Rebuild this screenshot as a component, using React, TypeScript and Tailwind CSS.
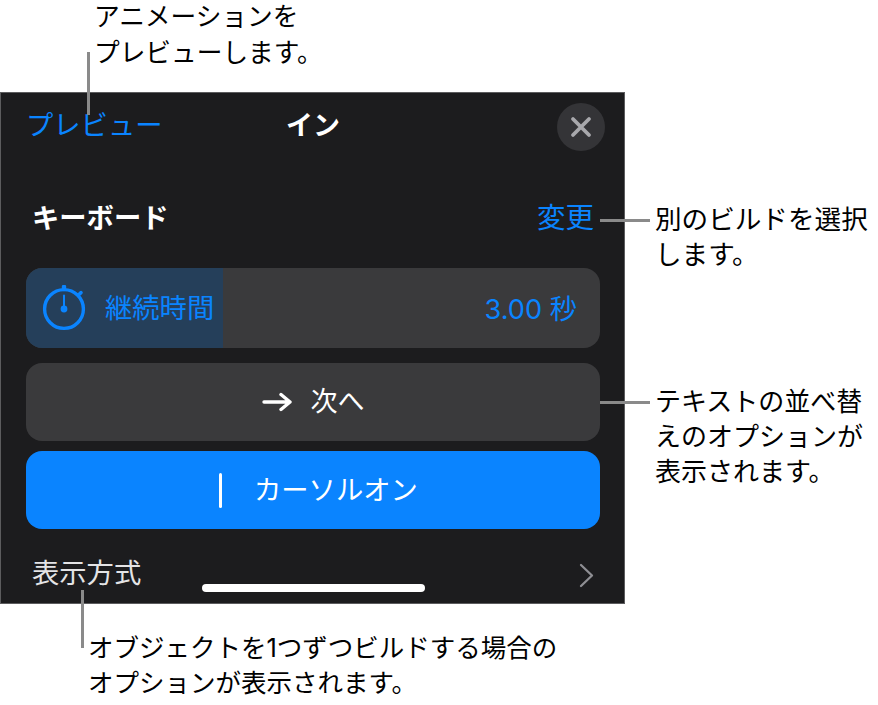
const font = "font-['Inter','Noto_Sans_CJK_JP',sans-serif]";

function Stopwatch() {
  return (
    <svg width="46" height="46" viewBox="0 0 46 46" fill="none" stroke="#0a84ff" strokeLinecap="round">
      <circle cx="23" cy="24" r="19.4" strokeWidth="3.4" />
      <path d="M23 1.8v2.2" strokeWidth="4.4" />
      <path d="M38 9.5l2-1.8" strokeWidth="3.6" />
      <path d="M23 10.5V24" strokeWidth="2" />
      <circle cx="23" cy="24" r="3.4" fill="#0a84ff" stroke="none" />
    </svg>
  );
}

function CloseIcon() {
  return (
    <svg width="24" height="24" viewBox="0 0 24 24" fill="none" stroke="#a8a8ac" strokeWidth="3.8" strokeLinecap="round">
      <path d="M4 4l16 16M20 4L4 20" />
    </svg>
  );
}

function ArrowIcon() {
  return (
    <svg width="30" height="22" viewBox="0 0 30 22" fill="none" stroke="#fff" strokeWidth="3.4" strokeLinecap="round" strokeLinejoin="round">
      <path d="M2 11h26M19 3.5l9 7.5-9 7.5" />
    </svg>
  );
}

function Chevron() {
  return (
    <svg width="15" height="25" viewBox="0 0 15 25" fill="none" stroke="#8e8e93" strokeWidth="2.3" strokeLinecap="round" strokeLinejoin="round">
      <path d="M2 2l11 10.5L2 23" />
    </svg>
  );
}

function Panel() {
  return (
    <div className="relative w-[625px] h-[512px] bg-[#1c1c1e] border border-[#5c5c5e] pl-[25px] pr-[24px] text-white">
      {/* Header */}
      <div className="relative flex items-center justify-between h-[64px]">
        <span className="pt-[2px] text-[#0a84ff] text-[27.3px]">プレビュー</span>
        <span className="absolute left-[260px] pt-[2px] font-bold text-[27px]">イン</span>
        <button className="flex items-center justify-center w-[48px] h-[48px] mt-[4px] mr-[-5px] rounded-full bg-[#343437]">
          <CloseIcon />
        </button>
      </div>

      {/* Section title */}
      <div className="flex items-center justify-between h-[40px] mt-[41px] pl-[6px] pr-[6px]">
        <span className="pt-[2px] font-bold text-[27.3px]">キーボード</span>
        <span className="text-[#0a84ff] text-[28.5px]">変更</span>
      </div>

      {/* Duration */}
      <div className="flex items-center h-[80px] mt-[30px] rounded-[16px] bg-[#3a3a3c] overflow-hidden">
        <div className="flex items-center w-[197px] h-full bg-[#253f5a] pl-[15px]">
          <Stopwatch />
          <span className="ml-[18px] pt-[2px] text-[#0a84ff] text-[27.3px]">継続時間</span>
        </div>
        <span className="ml-auto mr-[23px] pt-[4px] text-[#0a84ff] text-[27.2px]">3.00 秒</span>
      </div>

      {/* Order */}
      <div className="flex items-center justify-center gap-[19px] h-[78px] mt-[15px] rounded-[16px] bg-[#3a3a3c]">
        <ArrowIcon />
        <span className="text-[27px]">次へ</span>
      </div>

      {/* Build */}
      <div className="relative flex items-center h-[78px] mt-[10px] rounded-[16px] bg-[#0a84ff]">
        <div className="w-[3px] h-[35px] ml-[193px] bg-white rounded-full" />
        <span className="ml-[32px] pt-[2px] text-[27.3px]">カーソルオン</span>
      </div>

      {/* Footer */}
      <div className="flex items-center justify-between h-[40px] mt-[25px] pl-[6px]">
        <span className="text-[#e4e4e6] text-[27.3px]">表示方式</span>
        <div className="mr-[6px] pt-[2px]">
          <Chevron />
        </div>
      </div>

      <div className="absolute left-[201px] top-[491px] w-[223px] h-[8px] rounded-full bg-white" />
    </div>
  );
}

export default function App() {
  return (
    <div className={`relative w-[878px] h-[705px] bg-white overflow-hidden pt-[92px] text-black ${font}`}>
      <Panel />

      {/* Callouts */}
      <div className="absolute left-[87px] top-[52px] w-[2.5px] h-[63px] bg-[#8a8a8a]" />
      <p className="absolute left-[94px] top-[-1px] text-[25.7px] leading-[36px] whitespace-nowrap">
        アニメーションを
        <br />
        プレビューします。
      </p>

      <div className="absolute left-[600px] top-[219px] w-[50px] h-[2.5px] bg-[#8a8a8a]" />
      <p className="absolute left-[655px] top-[202px] text-[26.6px] leading-[35px] whitespace-nowrap">
        別のビルドを選択
        <br />
        します。
      </p>

      <div className="absolute left-[600px] top-[401px] w-[50px] h-[2.5px] bg-[#8a8a8a]" />
      <p className="absolute left-[655px] top-[384px] text-[26px] leading-[35px] whitespace-nowrap">
        テキストの並べ替
        <br />
        えのオプションが
        <br />
        表示されます。
      </p>

      <div className="absolute left-[81px] top-[590px] w-[2.5px] h-[58px] bg-[#8a8a8a]" />
      <p className="absolute left-[88px] top-[630px] text-[25.5px] leading-[35px] whitespace-nowrap">
        オブジェクトを1つずつビルドする場合の
        <br />
        オプションが表示されます。
      </p>
    </div>
  );
}
